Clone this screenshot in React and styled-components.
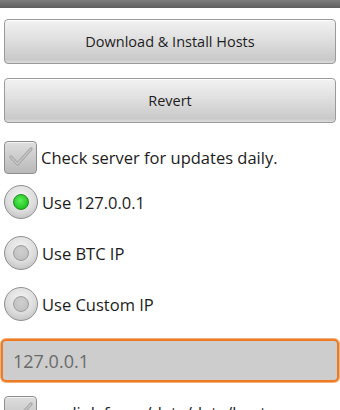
import React from "react";
import styled, { createGlobalStyle } from "styled-components";

const GlobalStyle = createGlobalStyle`
  body {
    margin: 0;
    background: #ffffff;
    font-family: "Open Sans", "Noto Sans", sans-serif;
  }
`;

const Page = styled.div`
  width: 340px;
  height: 410px;
  overflow: hidden;
  background: #ffffff;
  display: flex;
  flex-direction: column;
`;

const TitleBar = styled.div`
  height: 8px;
  flex: none;
  background: linear-gradient(#7c7c7c, #5f5f5f);
`;

const Content = styled.div`
  display: flex;
  flex-direction: column;
  padding: 11px 4px 0 4px;
`;

const Button = styled.div`
  height: 45px;
  box-sizing: border-box;
  margin-bottom: ${(p) => p.$gap || 0}px;
  border: 1px solid #9a9a9a;
  border-radius: 4px;
  background: linear-gradient(#f2f2f2 0%, #e2e2e2 40%, #c9c9c9 92%, #dcdcdc 100%);
  box-shadow: inset 0 1px 0 #ffffff;
  display: flex;
  align-items: center;
  justify-content: center;
  font-size: 14.5px;
  color: #1e1e1e;
`;

const Row = styled.div`
  display: flex;
  align-items: center;
  height: 34px;
  margin-top: ${(p) => p.$top}px;
  gap: 4px;
  font-size: 16.5px;
  color: #1c1c1c;
`;

const CheckBox = styled.div`
  width: 33px;
  height: 33px;
  box-sizing: border-box;
  flex: none;
  border: 1px solid #8e8e8e;
  border-radius: 4px;
  background: linear-gradient(#dedede, #b9b9b9);
  box-shadow: inset 0 1px 0 #f4f4f4;
  display: flex;
  align-items: center;
  justify-content: center;
`;

const Radio = styled.div`
  width: 34px;
  height: 34px;
  box-sizing: border-box;
  flex: none;
  border-radius: 50%;
  border: 1px solid #8f8f8f;
  background: radial-gradient(circle at 50% 35%, #f4f4f4 0%, #dcdcdc 55%, #b4b4b4 100%);
  display: flex;
  align-items: center;
  justify-content: center;
`;

const Dot = styled.div`
  width: 16px;
  height: 16px;
  border-radius: 50%;
  box-sizing: border-box;
  border: 1px solid ${(p) => (p.$on ? "#1f8f1f" : "#9c9c9c")};
  background: ${(p) =>
    p.$on
      ? "radial-gradient(circle at 45% 40%, #5cf05c, #22c422 70%, #1aa01a)"
      : "radial-gradient(circle at 50% 35%, #cfcfcf, #bdbdbd)"};
`;

const EditText = styled.div`
  margin: 18px -3px 0 -3px;
  height: 43px;
  box-sizing: border-box;
  border: 2px solid #ee7a24;
  border-radius: 5px;
  box-shadow: 0 0 0 1px #f6b27c;
  background: #cdcdcd;
  display: flex;
  align-items: center;
  padding-left: 10px;
  font-size: 18px;
  color: #6a6a6a;
`;

const Check = () => (
  <svg width="26" height="22" viewBox="0 0 26 22">
    <path
      d="M3 11 L9.5 18 L23 3"
      fill="none"
      stroke="#a3a3a3"
      strokeWidth="3.2"
      strokeLinecap="round"
      strokeLinejoin="round"
    />
    <path
      d="M3 11 L9.5 18 L23 3"
      fill="none"
      stroke="#c9c9c9"
      strokeWidth="1.2"
      strokeLinecap="round"
      strokeLinejoin="round"
    />
  </svg>
);

export default function App() {
  return (
    <Page>
      <GlobalStyle />
      <TitleBar />
      <Content>
        <Button $gap={14}>Download &amp; Install Hosts</Button>
        <Button>Revert</Button>
        <Row $top={17}>
          <CheckBox>
            <Check />
          </CheckBox>
          Check server for updates daily.
        </Row>
        <Row $top={11}>
          <Radio>
            <Dot $on />
          </Radio>
          Use 127.0.0.1
        </Row>
        <Row $top={17}>
          <Radio>
            <Dot />
          </Radio>
          Use BTC IP
        </Row>
        <Row $top={17}>
          <Radio>
            <Dot />
          </Radio>
          Use Custom IP
        </Row>
        <EditText>127.0.0.1</EditText>
        <Row $top={13}>
          <CheckBox>
            <Check />
          </CheckBox>
          symlink from /data/data/hosts
        </Row>
      </Content>
    </Page>
  );
}
